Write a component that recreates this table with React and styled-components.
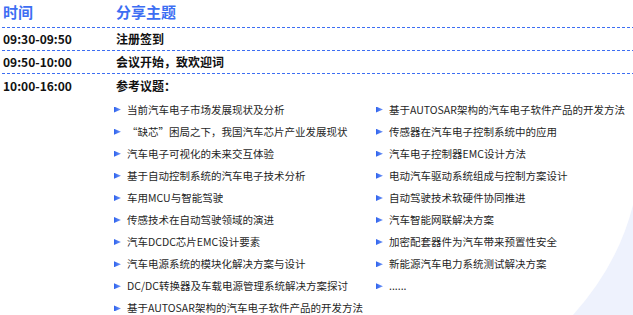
import React from 'react'
import styled, { createGlobalStyle } from 'styled-components'

const GlobalStyle = createGlobalStyle`
  html, body {
    margin: 0;
    padding: 0;
    background: #fff;
  }
  body {
    font-family: "Noto Sans CJK SC", "Noto Sans", sans-serif;
    color: #1a1a1a;
  }
`

const Page = styled.div`
  position: relative;
  width: 633px;
  height: 315px;
  overflow: hidden;
  background: #fff;
`

const Decor = styled.svg`
  position: absolute;
  right: 0;
  bottom: 0;
  width: 60px;
  height: 110px;
  z-index: 0;
`

const Table = styled.div`
  position: relative;
  z-index: 1;
  padding-left: 2px;
`

const Row = styled.div`
  display: grid;
  grid-template-columns: 113px 1fr;
  align-items: center;
  height: ${(p) => p.h || 22}px;
  padding-left: 1px;
`

const HeadCell = styled.div`
  font-size: 15px;
  font-weight: 700;
  color: #3d6ef3;
  line-height: 1;
  padding-bottom: 4px;
`

const Time = styled.div`
  font-size: 12px;
  font-weight: 700;
  color: #111;
  line-height: 1;
`

const Topic = styled.div`
  font-size: 12px;
  font-weight: 700;
  color: #111;
  line-height: 1;
`

const Divider = styled.div`
  height: 1px;
  background: repeating-linear-gradient(to right, #3d6ef3 0 3px, transparent 3px 5px);
`

const Lists = styled.div`
  display: grid;
  grid-template-columns: 262px 1fr;
  margin-left: 112px;
  padding-top: 1px;
`

const List = styled.ul`
  list-style: none;
  margin: 0;
  padding: 0;
`

const Item = styled.li`
  display: flex;
  align-items: center;
  height: 22.1px;
  font-size: 10.5px;
  color: #1f1f1f;
  white-space: nowrap;

  &::before {
    content: '';
    flex: none;
    width: 7px;
    height: 6px;
    margin-right: 6px;
    margin-top: 1px;
    background: linear-gradient(to right, #2f63ee, #6f95f6);
    clip-path: polygon(0 0, 100% 50%, 0 100%);
  }
`

const leftTopics = [
  '当前汽车电子市场发展现状及分析',
  '“缺芯”困局之下，我国汽车芯片产业发展现状',
  '汽车电子可视化的未来交互体验',
  '基于自动控制系统的汽车电子技术分析',
  '车用MCU与智能驾驶',
  '传感技术在自动驾驶领域的演进',
  '汽车DCDC芯片EMC设计要素',
  '汽车电源系统的模块化解决方案与设计',
  'DC/DC转换器及车载电源管理系统解决方案探讨',
  '基于AUTOSAR架构的汽车电子软件产品的开发方法',
]

const rightTopics = [
  '基于AUTOSAR架构的汽车电子软件产品的开发方法',
  '传感器在汽车电子控制系统中的应用',
  '汽车电子控制器EMC设计方法',
  '电动汽车驱动系统组成与控制方案设计',
  '自动驾驶技术软硬件协同推进',
  '汽车智能网联解决方案',
  '加密配套器件为汽车带来预置性安全',
  '新能源汽车电力系统测试解决方案',
  '......',
]

const schedule = [
  ['09:30-09:50', '注册签到'],
  ['09:50-10:00', '会议开始，致欢迎词'],
]

export default function App() {
  return (
    <Page lang="zh-CN">
      <GlobalStyle />
      <Decor viewBox="0 0 60 110">
        <path d="M60 0 Q45 60 0 110 L60 110 Z" fill="#eef2fd" />
      </Decor>
      <Table>
        <Row h={27}>
          <HeadCell>时间</HeadCell>
          <HeadCell>分享主题</HeadCell>
        </Row>
        {schedule.map(([t, s]) => (
          <React.Fragment key={t}>
            <Divider />
            <Row h={22}>
              <Time>{t}</Time>
              <Topic>{s}</Topic>
            </Row>
          </React.Fragment>
        ))}
        <Divider />
        <Row h={23}>
          <Time>10:00-16:00</Time>
          <Topic>参考议题：</Topic>
        </Row>
        <Lists>
          <List>
            {leftTopics.map((t, i) => (
              <Item key={i}>{t}</Item>
            ))}
          </List>
          <List>
            {rightTopics.map((t, i) => (
              <Item key={i}>{t}</Item>
            ))}
          </List>
        </Lists>
      </Table>
    </Page>
  )
}
